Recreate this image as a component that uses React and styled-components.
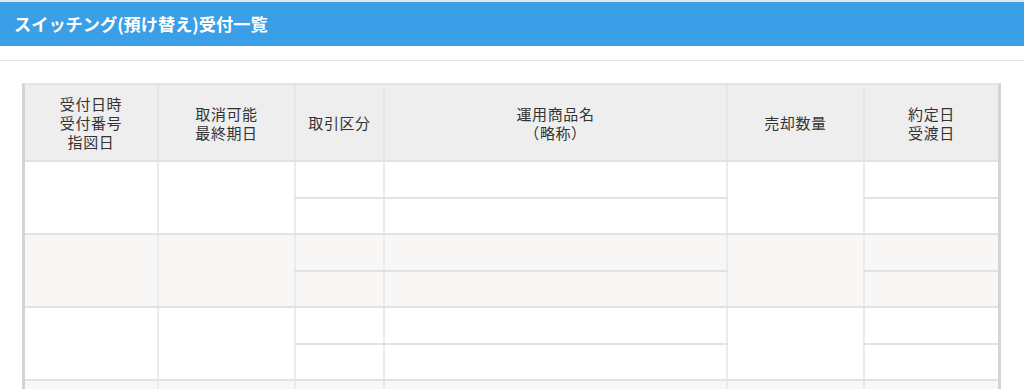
import React from "react";
import styled, { createGlobalStyle } from "styled-components";

const GlobalStyle = createGlobalStyle`
    body {
        margin: 0;
        background: #fff;
        font-family: "Noto Sans CJK JP", "Noto Sans", sans-serif;
        color: #333;
    }
`;

const Page = styled.div`
    width: 1024px;
    border-top: 2px solid #e6e6e6;
`;

const TitleBar = styled.h1`
    margin: 0;
    height: 44px;
    background-color: #3a9fe6;
    color: #fff;
    font-size: 17.2px;
    font-weight: bold;
    line-height: 44px;
    padding-left: 14px;
`;

const Divider = styled.div`
    margin-top: 14px;
    border-top: 1px solid #e2e2e2;
`;

const TableWrap = styled.div`
    margin: 22px 0 0 22px;
    width: 979px;
    border-left: 3px solid #d4d4d4;
    border-right: 3px solid #d4d4d4;
    border-top: 2px solid #e4e4e4;
    box-sizing: border-box;
`;

const Table = styled.table`
    width: 100%;
    border-collapse: collapse;
    table-layout: fixed;
`;

const Th = styled.th`
    background: #eeeeee;
    font-weight: normal;
    font-size: 15px;
    line-height: 19px;
    color: #333;
    height: 75px;
    padding: 0;
    text-align: center;
    letter-spacing: 0.6px;
    border-left: 2px solid #e6e6e6;
    border-bottom: 2px solid #e2e2e2;
    &:first-child { border-left: none; }
`;

const HeadLine = styled.span`
    display: block;
    height: 19px;
    white-space: nowrap;
`;

const Td = styled.td`
    background: ${({ alt }) => (alt ? "#f8f7f5" : "#fff")};
    height: ${({ span }) => (span ? "71px" : "34px")};
    padding: 0;
    border-left: ${({ first }) => (first ? "none" : "2px solid #ebebeb")};
    border-bottom: 2px solid #e2e2e2;
`;

const columns = [
    { w: 133, label: ["受付日時", "受付番号", "指図日"] },
    { w: 137, label: ["取消可能", "最終期日"] },
    { w: 89, label: ["取引区分"] },
    { w: 343, label: ["運用商品名", "（略称）"] },
    { w: 137, label: ["売却数量"] },
    { w: 134, label: ["約定日", "受渡日"] },
];

function Group({ alt }) {
    return (
        <>
            <tr>
                <Td alt={alt} first span rowSpan={2} />
                <Td alt={alt} span rowSpan={2} />
                <Td alt={alt} />
                <Td alt={alt} />
                <Td alt={alt} span rowSpan={2} />
                <Td alt={alt} />
            </tr>
            <tr>
                <Td alt={alt} />
                <Td alt={alt} />
                <Td alt={alt} />
            </tr>
        </>
    );
}

export default function App() {
    return (
        <Page>
            <GlobalStyle />
            <TitleBar>スイッチング(預け替え)受付一覧</TitleBar>
            <Divider />
            <TableWrap>
                <Table>
                    <colgroup>
                        {columns.map((c, i) => (
                            <col key={i} style={{ width: c.w }} />
                        ))}
                    </colgroup>
                    <thead>
                        <tr>
                            {columns.map((c, i) => (
                                <Th key={i}>
                                    {c.label.map((l, j) => (
                                        <HeadLine key={j}>{l}</HeadLine>
                                    ))}
                                </Th>
                            ))}
                        </tr>
                    </thead>
                    <tbody>
                        <Group />
                        <Group alt />
                        <Group />
                        <Group alt />
                    </tbody>
                </Table>
            </TableWrap>
        </Page>
    );
}
